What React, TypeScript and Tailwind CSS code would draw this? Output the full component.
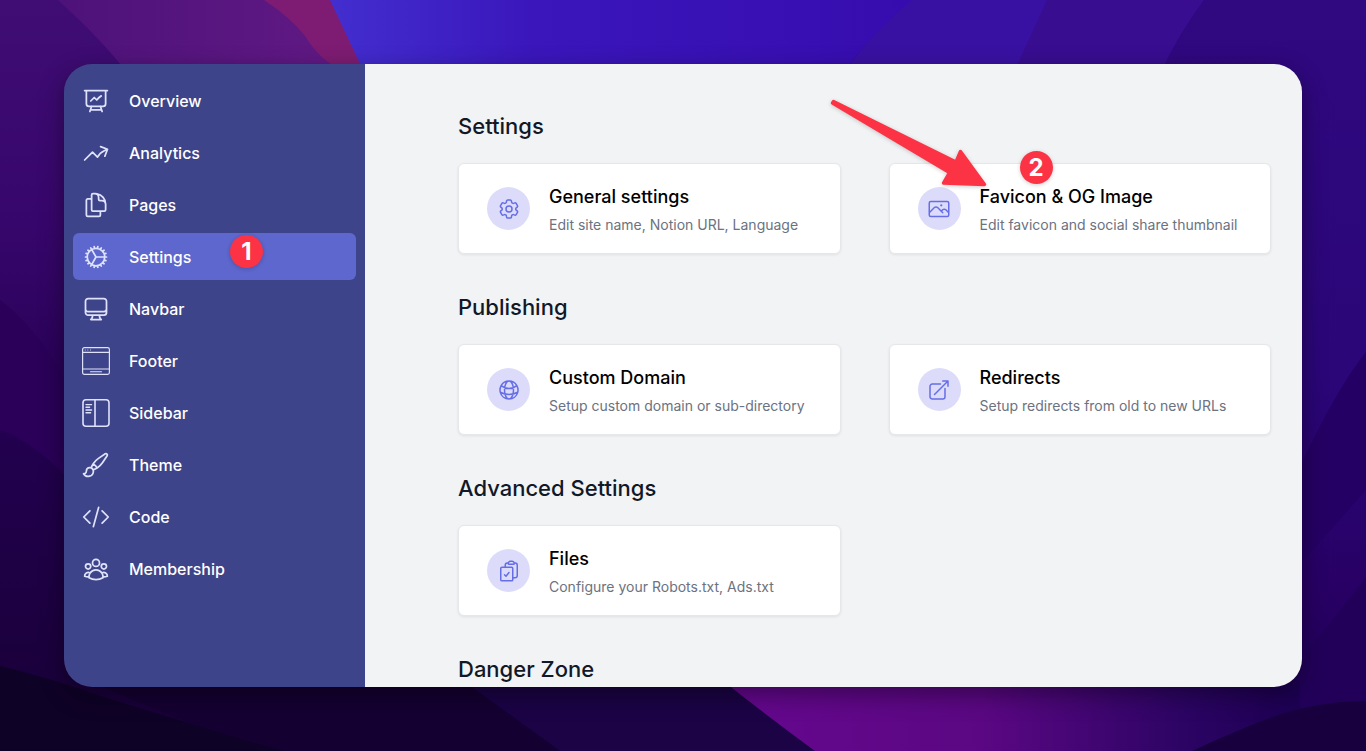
import type { ComponentType, ReactNode } from "react";
import {
  HiOutlineArrowTopRightOnSquare,
  HiOutlineArrowTrendingUp,
  HiOutlineClipboardDocumentCheck,
  HiOutlineCodeBracket,
  HiOutlineCog,
  HiOutlineCog6Tooth,
  HiOutlineComputerDesktop,
  HiOutlineDocumentDuplicate,
  HiOutlineGlobeAlt,
  HiOutlinePaintBrush,
  HiOutlinePhoto,
  HiOutlinePresentationChartLine,
  HiOutlineUserGroup,
} from "react-icons/hi2";

type Icon = ComponentType<{ className?: string }>;

function FooterIcon({ className }: { className?: string }) {
  return (
    <svg viewBox="0 0 28 28" fill="none" stroke="currentColor" strokeWidth="1.2" strokeLinecap="round" className={className}>
      <rect x="0.6" y="0.6" width="26.8" height="26.8" rx="1.8" />
      <path d="M0.6 5.3h26.8M0.6 22h26.8" />
      <path d="M8.5 24.8h11" strokeWidth="1.1" />
      <path d="M3.2 3h.1M5.8 3h.1M8.4 3h.1" strokeWidth="1" />
    </svg>
  );
}

function SidebarIcon({ className }: { className?: string }) {
  return (
    <svg viewBox="0 0 28 28" fill="none" stroke="currentColor" strokeWidth="1.6" strokeLinecap="round" className={className}>
      <rect x="1" y="0.8" width="26" height="26.4" rx="3" />
      <path d="M13 0.8v26.4" />
      <path d="M4 5.6h5.6M4 8.3h3.6M4 11h5.6M4 13.7h4.6" strokeWidth="1.4" />
    </svg>
  );
}

function Badge({ children, className }: { children: ReactNode; className: string }) {
  return (
    <span
      className={`absolute flex size-[33px] items-center justify-center rounded-full bg-[#fc3345] text-2xl font-bold text-white shadow-[0_1px_4px_rgba(0,0,0,0.2)] ${className}`}
    >
      {children}
    </span>
  );
}

function Arrow() {
  return (
    <svg
      viewBox="0 0 160 92"
      aria-hidden="true"
      className="pointer-events-none absolute -top-[67px] -left-[62px] h-[92px] w-[160px] drop-shadow-[0_1px_2px_rgba(0,0,0,0.2)]"
    >
      <path
        d="M5.500 4.500 L128 65 L132.500 54.500 L156.500 87.500 L115.500 86 L121.500 75.500 L4.500 6 Z"
        fill="#fc3345"
        stroke="#fc3345"
        strokeWidth="3.4"
        strokeLinejoin="round"
      />
    </svg>
  );
}

const navItems: { label: string; icon: Icon; active?: boolean }[] = [
  { label: "Overview", icon: HiOutlinePresentationChartLine },
  { label: "Analytics", icon: HiOutlineArrowTrendingUp },
  { label: "Pages", icon: HiOutlineDocumentDuplicate },
  { label: "Settings", icon: HiOutlineCog, active: true },
  { label: "Navbar", icon: HiOutlineComputerDesktop },
  { label: "Footer", icon: FooterIcon },
  { label: "Sidebar", icon: SidebarIcon },
  { label: "Theme", icon: HiOutlinePaintBrush },
  { label: "Code", icon: HiOutlineCodeBracket },
  { label: "Membership", icon: HiOutlineUserGroup },
];

type CardData = { title: string; text: string; icon: Icon; marked?: boolean };

const sections: { title: string; cards: CardData[] }[] = [
  {
    title: "Settings",
    cards: [
      { title: "General settings", text: "Edit site name, Notion URL, Language", icon: HiOutlineCog6Tooth },
      { title: "Favicon & OG Image", text: "Edit favicon and social share thumbnail", icon: HiOutlinePhoto, marked: true },
    ],
  },
  {
    title: "Publishing",
    cards: [
      { title: "Custom Domain", text: "Setup custom domain or sub-directory", icon: HiOutlineGlobeAlt },
      { title: "Redirects", text: "Setup redirects from old to new URLs", icon: HiOutlineArrowTopRightOnSquare },
    ],
  },
  {
    title: "Advanced Settings",
    cards: [{ title: "Files", text: "Configure your Robots.txt, Ads.txt", icon: HiOutlineClipboardDocumentCheck }],
  },
  { title: "Danger Zone", cards: [] },
];

function Sidebar() {
  return (
    <nav className="flex w-[301px] shrink-0 flex-col gap-[5px] bg-[#3e4489] px-[9px] pt-[13px]">
      {navItems.map(({ label, icon: ItemIcon, active }) => (
        <a
          key={label}
          href="#"
          className={`relative flex h-[47px] shrink-0 items-center gap-[19px] rounded-md px-[9px] text-base font-medium text-white ${
            active ? "bg-[#5d67cd]" : ""
          }`}
        >
          <ItemIcon className="size-7 shrink-0 text-[#dfe2fb]" />
          {label}
          {active && <Badge className="top-[2px] left-[157px]">1</Badge>}
        </a>
      ))}
    </nav>
  );
}

function Card({ title, text, icon: CardIcon, marked }: CardData) {
  return (
    <a
      href="#"
      className="relative flex h-[91px] items-center gap-[19px] rounded-md border border-[#e5e7eb] bg-white pr-5 pl-7 shadow-[0_1px_3px_rgba(0,0,0,0.08)]"
    >
      <span className="flex size-[43px] shrink-0 items-center justify-center rounded-full bg-[#dcdcfa] text-[#666ee6]">
        <CardIcon className="size-6" />
      </span>
      <span className="flex min-w-0 flex-col pt-[5px]">
        <span className="text-lg leading-7 font-medium text-black">{title}</span>
        <span className="text-sm leading-7 text-[#6b7280]">{text}</span>
      </span>
      {marked && <Arrow />}
      {marked && <Badge className="-top-[13px] left-[130px]">2</Badge>}
    </a>
  );
}

function Wallpaper() {
  return (
    <svg
      viewBox="0 0 1366 751"
      preserveAspectRatio="none"
      aria-hidden="true"
      className="absolute inset-0 -z-10 size-full"
    >
      <defs>
        <linearGradient id="left" x1="0" y1="0" x2="0" y2="1">
          <stop offset="0" stopColor="#3f0d74" />
          <stop offset="0.3" stopColor="#37066c" />
          <stop offset="0.6" stopColor="#22004e" />
          <stop offset="1" stopColor="#180036" />
        </linearGradient>
        <linearGradient id="right" x1="0" y1="0" x2="0" y2="1">
          <stop offset="0" stopColor="#300880" />
          <stop offset="0.5" stopColor="#2a0678" />
          <stop offset="0.8" stopColor="#280064" />
          <stop offset="1" stopColor="#1c0052" />
        </linearGradient>
        <linearGradient id="plum" x1="0" y1="0" x2="1" y2="0">
          <stop offset="0" stopColor="#4d127a" />
          <stop offset="1" stopColor="#611984" />
        </linearGradient>
        <linearGradient id="blue" x1="0" y1="0" x2="1" y2="0">
          <stop offset="0" stopColor="#432ecf" />
          <stop offset="0.35" stopColor="#3a16bb" />
          <stop offset="1" stopColor="#370cae" />
        </linearGradient>
        <linearGradient id="magenta" x1="0" y1="0" x2="1" y2="0">
          <stop offset="0" stopColor="#66078f" />
          <stop offset="0.45" stopColor="#5b0783" />
          <stop offset="0.8" stopColor="#2c0464" />
          <stop offset="1" stopColor="#1c0052" />
        </linearGradient>
      </defs>
      <rect width="700" height="751" fill="url(#left)" />
      <rect x="683" width="683" height="751" fill="url(#right)" />
      <path d="M58 0H340V70H125Q100 38 58 0Z" fill="url(#plum)" />
      <path d="M264 0H332L364 70H340Q318 58 305 36Q290 17 264 0Z" fill="#7d1c72" />
      <path d="M330 0H915Q870 35 846 70H363Z" fill="url(#blue)" />
      <path d="M912 0H1048L1016 70H846Q870 35 912 0Z" fill="#3911a2" />
      <path d="M1047 0H1204Q1178 35 1162 70H1015Z" fill="#380d90" />
      <path d="M1366 352Q1335 390 1295 478V570L1366 490Z" fill="#250064" />
      <path d="M1366 578L1290 672V751H1366Z" fill="#22005a" />
      <path d="M0 300Q40 330 70 390V480Q30 440 0 430Z" fill="#2a0058" />
      <path d="M0 666Q50 678 100 696Q200 727 285 751H0Z" fill="#0f0227" />
      <path d="M90 680H465Q520 722 562 751H285Q180 725 90 680Z" fill="#150032" />
      <path d="M462 680H735L820 751H560Q520 722 462 680Z" fill="#1b0346" />
      <path d="M722 680H1300V751H815Q775 722 722 680Z" fill="url(#magenta)" />
      <path d="M1192 751Q1220 738 1247 727Q1310 700 1366 701V751Z" fill="#18003e" />
    </svg>
  );
}

export default function App() {
  return (
    <div className="relative isolate flex h-screen p-16 font-['Inter',sans-serif]">
      <Wallpaper />
      <div className="flex min-w-0 flex-1 overflow-hidden rounded-[28px] shadow-[0_8px_24px_rgba(0,0,0,0.4)]">
        <Sidebar />
        <main className="flex min-w-0 flex-1 flex-col gap-[37px] bg-[#f2f3f5] pt-[46px] pr-[31px] pl-[93px]">
          {sections.map((section) => (
            <section key={section.title} className="flex flex-col gap-[21px]">
              <h2 className="text-[22px] leading-8 font-medium text-[#111827]">{section.title}</h2>
              {section.cards.length > 0 && (
                <div className="grid grid-cols-2 gap-12">
                  {section.cards.map((card) => (
                    <Card key={card.title} {...card} />
                  ))}
                </div>
              )}
            </section>
          ))}
        </main>
      </div>
    </div>
  );
}
